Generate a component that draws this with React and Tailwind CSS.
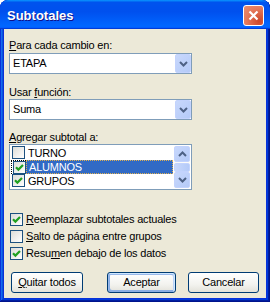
import React from "react";

const Check = () => (
  <svg width="9" height="9" viewBox="0 0 9 9">
    <path d="M1 4.2 L3.4 6.6 L8 2" fill="none" stroke="#21A121" strokeWidth="2.2" />
  </svg>
);

const Box = ({ checked }) => (
  <span className="flex items-center justify-center w-[13px] h-[13px] shrink-0 border border-[#1C5180] bg-[linear-gradient(135deg,#DCDCD7,#FFFFFF)]">
    {checked && <Check />}
  </span>
);

const Chevron = ({ up }) => (
  <svg width="9" height="6" viewBox="0 0 9 6">
    <path
      d={up ? "M1 5 L4.5 1.5 L8 5" : "M1 1 L4.5 4.5 L8 1"}
      fill="none"
      stroke="#4D6185"
      strokeWidth="2"
    />
  </svg>
);

const XpArrowBtn = ({ up, className = "" }) => (
  <div
    className={`flex items-center justify-center rounded-[2px] border border-[#C3D3FD] bg-[linear-gradient(135deg,#C8D8FC,#B4CAF8)] ${className}`}
  >
    <Chevron up={up} />
  </div>
);

const Combo = ({ value }) => (
  <div className="flex h-[21px] w-[183px] items-center border border-[#7F9DB9] bg-white">
    <span className="flex-1 pl-[3px] leading-[13px]">{value}</span>
    <XpArrowBtn className="h-[19px] w-[16px]" />
  </div>
);

const ListRow = ({ label, checked, selected }) => (
  <div className="flex h-[14px] items-start">
    <div
      className={`flex h-[14px] w-[15px] items-start pl-[1px] ${
        selected ? "border border-r-0 border-dotted border-black pl-0" : ""
      }`}
    >
      <Box checked={checked} />
    </div>
    <div
      className={`flex h-[14px] flex-1 items-center pl-[2px] leading-[13px] ${
        selected
          ? "bg-[#316AC5] text-white border border-dotted border-[#E0B050] pl-[1px]"
          : ""
      }`}
    >
      {label}
    </div>
  </div>
);

const Option = ({ checked, children }) => (
  <div className="flex h-[17px] items-center gap-[3px] pl-[1px]">
    <Box checked={checked} />
    <span className="leading-[13px]">{children}</span>
  </div>
);

const Btn = ({ children, def, className = "" }) => (
  <button
    className={`h-[21px] rounded-[3px] border border-[#003C74] bg-[linear-gradient(to_bottom,#FFFFFF,#F3F3EF_60%,#E3E2DA)] leading-[13px] text-black ${
      def
        ? "shadow-[inset_-1px_1px_#CEE7FF,inset_1px_2px_#98B8EA,inset_-2px_2px_#BCD4F6,inset_1px_-1px_#89ADE4,inset_2px_-2px_#89ADE4]"
        : ""
    } ${className}`}
  >
    {children}
  </button>
);

export default function App() {
  return (
    <div className="flex h-[302px] w-[270px] flex-col overflow-hidden rounded-t-[8px] bg-[#0831D9] font-['Liberation_Sans',Arial,sans-serif] text-[11px] tracking-[-0.2px] text-black shadow-[inset_-1px_-1px_#00138C,inset_1px_1px_#0831D9,inset_-2px_-2px_#001EA0,inset_2px_2px_#166AEE,inset_-3px_-3px_#003BDA,inset_3px_3px_#0855DD]">
      {/* TITLE BAR */}
      <div className="flex h-[29px] shrink-0 items-center justify-between rounded-t-[8px] bg-[linear-gradient(to_bottom,#0997FF,#0053EE_8%,#0050EE_40%,#0066FF_88%,#0066FF_93%,#005BFF_95%,#003DD7_96%,#003DD7)] pl-[7px] pr-[6px]">
        <span className="mt-[2px] text-[13px] font-bold tracking-normal text-white [text-shadow:1px_1px_#0F1089] leading-[15px]">
          Subtotales
        </span>
        <div className="mt-[1px] flex h-[21px] w-[21px] items-center justify-center rounded-[3px] border border-white bg-[radial-gradient(circle_at_80%_80%,#CC4628,#E5795B_60%,#EA8D6F)]">
          <svg width="11" height="11" viewBox="0 0 11 11">
            <path d="M1.5 1.5 L9.5 9.5 M9.5 1.5 L1.5 9.5" stroke="white" strokeWidth="2.2" />
          </svg>
        </div>
      </div>

      {/* BODY */}
      <div className="mx-[4px] mb-[4px] flex flex-1 flex-col bg-[#ECE9D8] px-[5px]">
        <div className="mt-[10px] h-[13px] leading-[13px]">
          <u>P</u>ara cada cambio en:
        </div>
        <div className="mt-[1px]">
          <Combo value="ETAPA" />
        </div>

        <div className="mt-[12px] h-[13px] leading-[13px]">
          Usar <u>f</u>unción:
        </div>
        <div>
          <Combo value="Suma" />
        </div>

        <div className="mt-[11px] h-[13px] leading-[13px]">
          <u>A</u>gregar subtotal a:
        </div>
        <div className="flex h-[46px] w-[183px] border border-[#7F9DB9] bg-white p-[1px]">
          <div className="flex flex-1 flex-col">
            <ListRow label="TURNO" />
            <ListRow label="ALUMNOS" checked selected />
            <ListRow label="GRUPOS" checked />
          </div>
          <div className="ml-[1px] flex w-[16px] flex-col bg-[#FBFBF8]">
            <XpArrowBtn up className="h-[16px]" />
            <div className="mt-[1px] h-[9px] rounded-[2px] border border-[#C3D3FD] bg-[linear-gradient(to_right,#C8D8FC,#B4CAF8)]" />
            <div className="flex-1" />
            <XpArrowBtn className="h-[16px]" />
          </div>
        </div>

        <div className="mt-[21px] flex flex-col">
          <Option checked>
            <u>R</u>eemplazar subtotales actuales
          </Option>
          <Option>
            <u>S</u>alto de página entre grupos
          </Option>
          <Option checked>
            Resu<u>m</u>en debajo de los datos
          </Option>
        </div>

        <div className="mt-[10px] flex">
          <Btn className="ml-[2px] w-[72px]">
            <u>Q</u>uitar todos
          </Btn>
          <Btn def className="ml-[24px] w-[69px]">
            Aceptar
          </Btn>
          <Btn className="ml-[12px] w-[71px]">Cancelar</Btn>
        </div>
      </div>
    </div>
  );
}
